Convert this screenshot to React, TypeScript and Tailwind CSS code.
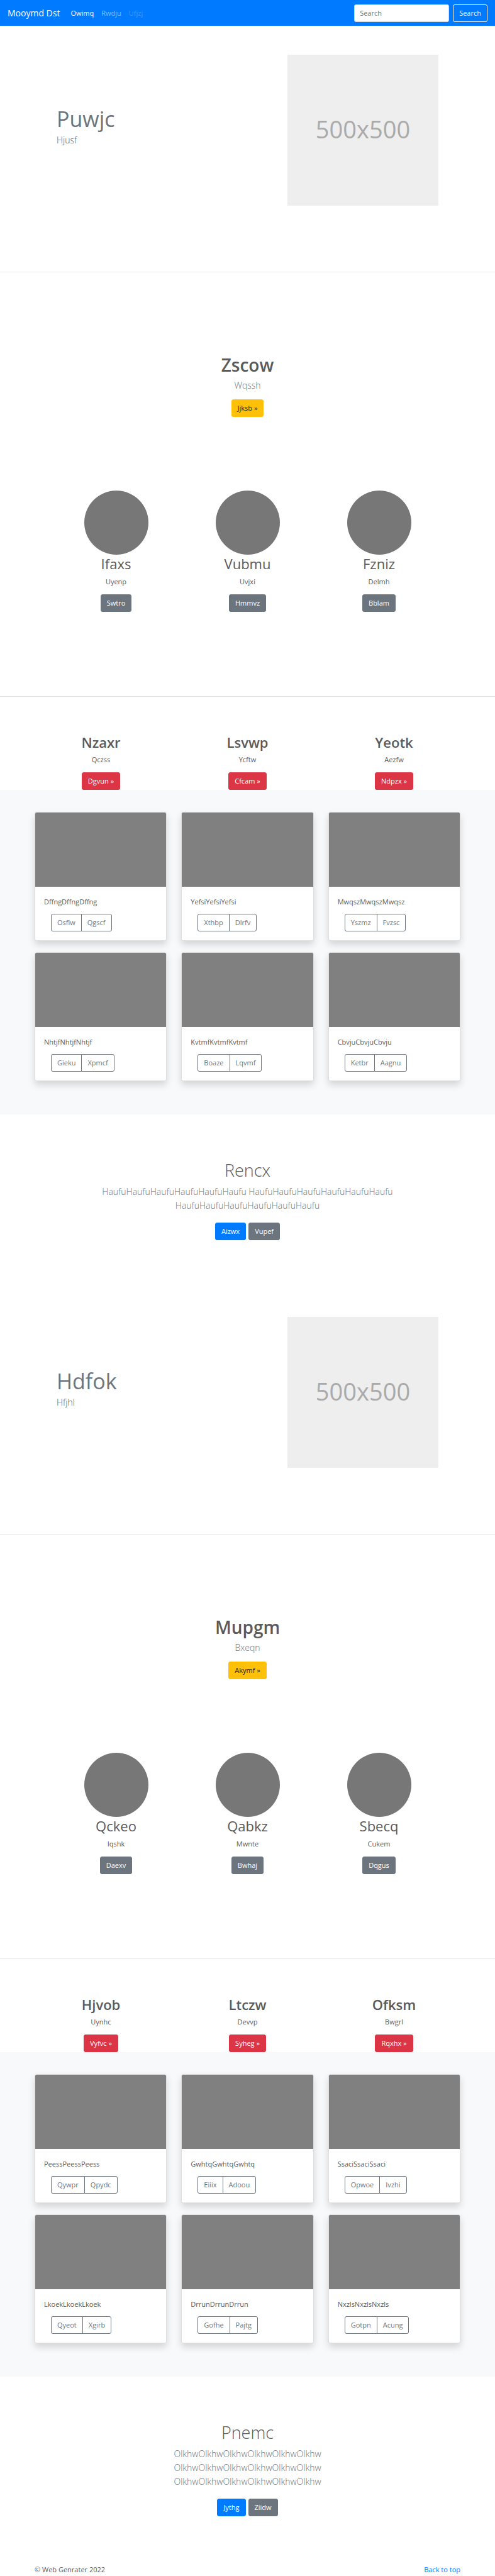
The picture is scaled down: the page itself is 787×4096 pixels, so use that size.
import type { ReactNode } from "react";

const BUTTON =
  "inline-flex h-7 items-center justify-center rounded-[3px] border px-[9px] text-[11px] leading-[18px] whitespace-nowrap";

const TONES = {
  primary: "border-[#007bff] bg-[#007bff] text-white",
  secondary: "border-[#6c757d] bg-[#6c757d] text-white",
  warning: "border-[#ffc107] bg-[#ffc107] text-[#212529]",
  danger: "border-[#dc3545] bg-[#dc3545] text-white",
};

function Button({ tone, children }: { tone: keyof typeof TONES; children: ReactNode }) {
  return (
    <button type="button" className={`${BUTTON} ${TONES[tone]}`}>
      {children}
    </button>
  );
}

function Navbar() {
  return (
    <nav className="flex min-h-[41px] items-center bg-[#007bff] px-3 text-[11px] leading-[18px] text-white">
      <a href="#" className="mr-[17px] text-[14px] leading-[22px]">
        Mooymd Dst
      </a>
      <ul className="mr-auto flex gap-3">
        <li>
          <a href="#">Owimq</a>
        </li>
        <li>
          <a href="#" className="text-white/50">
            Rwdju
          </a>
        </li>
        <li>
          <a href="#" className="text-white/25">
            Ufjzj
          </a>
        </li>
      </ul>
      <form className="flex gap-1.5" onSubmit={(e) => e.preventDefault()}>
        <input
          type="search"
          aria-label="Search"
          placeholder="Search"
          className="h-7 w-[151px] rounded-[3px] border border-[#ced4da] bg-white px-2 text-[#495057] placeholder:text-[#6c757d]"
        />
        <button type="submit" className={`${BUTTON} border-[#f8f9fa] text-[#f8f9fa]`}>
          Search
        </button>
      </form>
    </nav>
  );
}

function Hero({ title, text }: { title: string; text: string }) {
  return (
    <section className="flex items-start justify-between border-b border-[#e5e5e5] px-[90px] pt-[46px] pb-[105px]">
      <div className="pt-[79px]">
        <h2 className="text-[34px] leading-[46px] text-[#6c757d]">{title}</h2>
        <p className="text-[14px] leading-[22px] font-light">{text}</p>
      </div>
      <div className="flex size-60 items-center justify-center bg-[#eeeeee] pb-1 text-[38px] leading-[46px] text-[#aaaaaa]">
        500x500
      </div>
    </section>
  );
}

type Entry = { title: string; text: string; action: string };

function Features({ lead, items }: { lead: Entry; items: Entry[] }) {
  return (
    <section className="border-b border-[#e5e5e5] px-20 pt-[130px] pb-[134px] text-center">
      <h1 className="text-[28px] leading-[34px] font-semibold">{lead.title}</h1>
      <p className="mt-[5px] mb-[11px] text-[14px] leading-[22px] font-light text-[#6c757d]">{lead.text}</p>
      <div className="flex justify-center">
        <Button tone="warning">{lead.action} »</Button>
      </div>
      <div className="mt-[117px] grid grid-cols-3">
        {items.map((item) => (
          <div key={item.title} className="flex flex-col items-center">
            <div className="size-[102px] rounded-full bg-[#777777]" />
            <h2 className="text-[22px] leading-[28px]">{item.title}</h2>
            <p className="mt-1.5 mb-[11px]">{item.text}</p>
            <Button tone="secondary">{item.action}</Button>
          </div>
        ))}
      </div>
    </section>
  );
}

function Columns({ items }: { items: Entry[] }) {
  return (
    <section className="grid grid-cols-3 px-11 pt-[58px]">
      {items.map((item) => (
        <div key={item.title} className="flex flex-col items-center">
          <h2 className="text-[22px] leading-[28px] font-semibold">{item.title}</h2>
          <p className="mt-[5px] mb-[11px]">{item.text}</p>
          <Button tone="danger">{item.action} »</Button>
        </div>
      ))}
    </section>
  );
}

type CardData = [text: string, first: string, second: string];

function Album({ cards }: { cards: CardData[] }) {
  return (
    <section className="grid grid-cols-3 gap-x-[23px] gap-y-[18px] bg-[#f8f9fa] px-[55px] pt-[35px] pb-[53px]">
      {cards.map(([text, first, second]) => (
        <article
          key={text}
          className="overflow-hidden rounded-[3px] border border-[#dfdfdf] bg-white shadow-[0_6px_12px_rgba(0,0,0,0.15)]"
        >
          <div className="h-[118px] bg-[#808080]" />
          <div className="px-[14px] pt-[15px] pb-[14px]">
            <p>{text}</p>
            <div className="mt-[10px] ml-[11px] flex">
              <button type="button" className={`${BUTTON} rounded-r-none border-[#6c757d] text-[#6c757d]`}>
                {first}
              </button>
              <button type="button" className={`${BUTTON} -ml-px rounded-l-none border-[#6c757d] text-[#6c757d]`}>
                {second}
              </button>
            </div>
          </div>
        </article>
      ))}
    </section>
  );
}

function CallToAction(props: { title: string; text: string; primary: string; secondary: string }) {
  return (
    <section className="px-[160px] pt-[72px] pb-[76px] text-center">
      <h1 className="text-[27px] leading-[34px] font-light">{props.title}</h1>
      <p className="mt-1.5 mb-4 text-[14px] leading-[22px] font-light text-[#6c757d]">{props.text}</p>
      <div className="flex justify-center gap-1">
        <Button tone="primary">{props.primary}</Button>
        <Button tone="secondary">{props.secondary}</Button>
      </div>
    </section>
  );
}

export default function App() {
  return (
    <div className="bg-white font-['Open_Sans','Noto_Sans',sans-serif] text-[11px] leading-[18px] text-[#5a5a5a]">
      <Navbar />
      <main>
        <Hero title="Puwjc" text="Hjusf" />
        <Features
          lead={{ title: "Zscow", text: "Wqssh", action: "Jjksb" }}
          items={[
            { title: "Ifaxs", text: "Uyenp", action: "Swtro" },
            { title: "Vubmu", text: "Uvjxi", action: "Hmmvz" },
            { title: "Fzniz", text: "Delmh", action: "Bblam" },
          ]}
        />
        <Columns
          items={[
            { title: "Nzaxr", text: "Qczss", action: "Dgvun" },
            { title: "Lsvwp", text: "Ycftw", action: "Cfcam" },
            { title: "Yeotk", text: "Aezfw", action: "Ndpzx" },
          ]}
        />
        <Album
          cards={[
            ["DffngDffngDffng", "Osflw", "Qgscf"],
            ["YefsiYefsiYefsi", "Xthbp", "Dlrfv"],
            ["MwqszMwqszMwqsz", "Yszmz", "Fvzsc"],
            ["NhtjfNhtjfNhtjf", "Gieku", "Xpmcf"],
            ["KvtmfKvtmfKvtmf", "Boaze", "Lqvmf"],
            ["CbvjuCbvjuCbvju", "Ketbr", "Aagnu"],
          ]}
        />
        <CallToAction
          title="Rencx"
          text="HaufuHaufuHaufuHaufuHaufuHaufu HaufuHaufuHaufuHaufuHaufuHaufu HaufuHaufuHaufuHaufuHaufuHaufu"
          primary="Aizwx"
          secondary="Vupef"
        />
        <Hero title="Hdfok" text="Hfjhl" />
        <Features
          lead={{ title: "Mupgm", text: "Bxeqn", action: "Akymf" }}
          items={[
            { title: "Qckeo", text: "Iqshk", action: "Daexv" },
            { title: "Qabkz", text: "Mwnte", action: "Bwhaj" },
            { title: "Sbecq", text: "Cukem", action: "Dqgus" },
          ]}
        />
        <Columns
          items={[
            { title: "Hjvob", text: "Uynhc", action: "Vyfvc" },
            { title: "Ltczw", text: "Devvp", action: "Syheg" },
            { title: "Ofksm", text: "Bwgrl", action: "Rqxhx" },
          ]}
        />
        <Album
          cards={[
            ["PeessPeessPeess", "Qywpr", "Qpydc"],
            ["GwhtqGwhtqGwhtq", "Eiiix", "Adoou"],
            ["SsaciSsaciSsaci", "Opwoe", "Ivzhi"],
            ["LkoekLkoekLkoek", "Qyeot", "Xgirb"],
            ["DrrunDrrunDrrun", "Gofhe", "Pajtg"],
            ["NxzlsNxzlsNxzls", "Gotpn", "Acung"],
          ]}
        />
        <CallToAction
          title="Pnemc"
          text="OlkhwOlkhwOlkhwOlkhwOlkhwOlkhw OlkhwOlkhwOlkhwOlkhwOlkhwOlkhw OlkhwOlkhwOlkhwOlkhwOlkhwOlkhw"
          primary="Jythg"
          secondary="Ziidw"
        />
      </main>
      <footer className="flex justify-between px-[55px] pb-px">
        <p>© Web Genrater 2022</p>
        <a href="#" className="text-[#007bff]">
          Back to top
        </a>
      </footer>
    </div>
  );
}
